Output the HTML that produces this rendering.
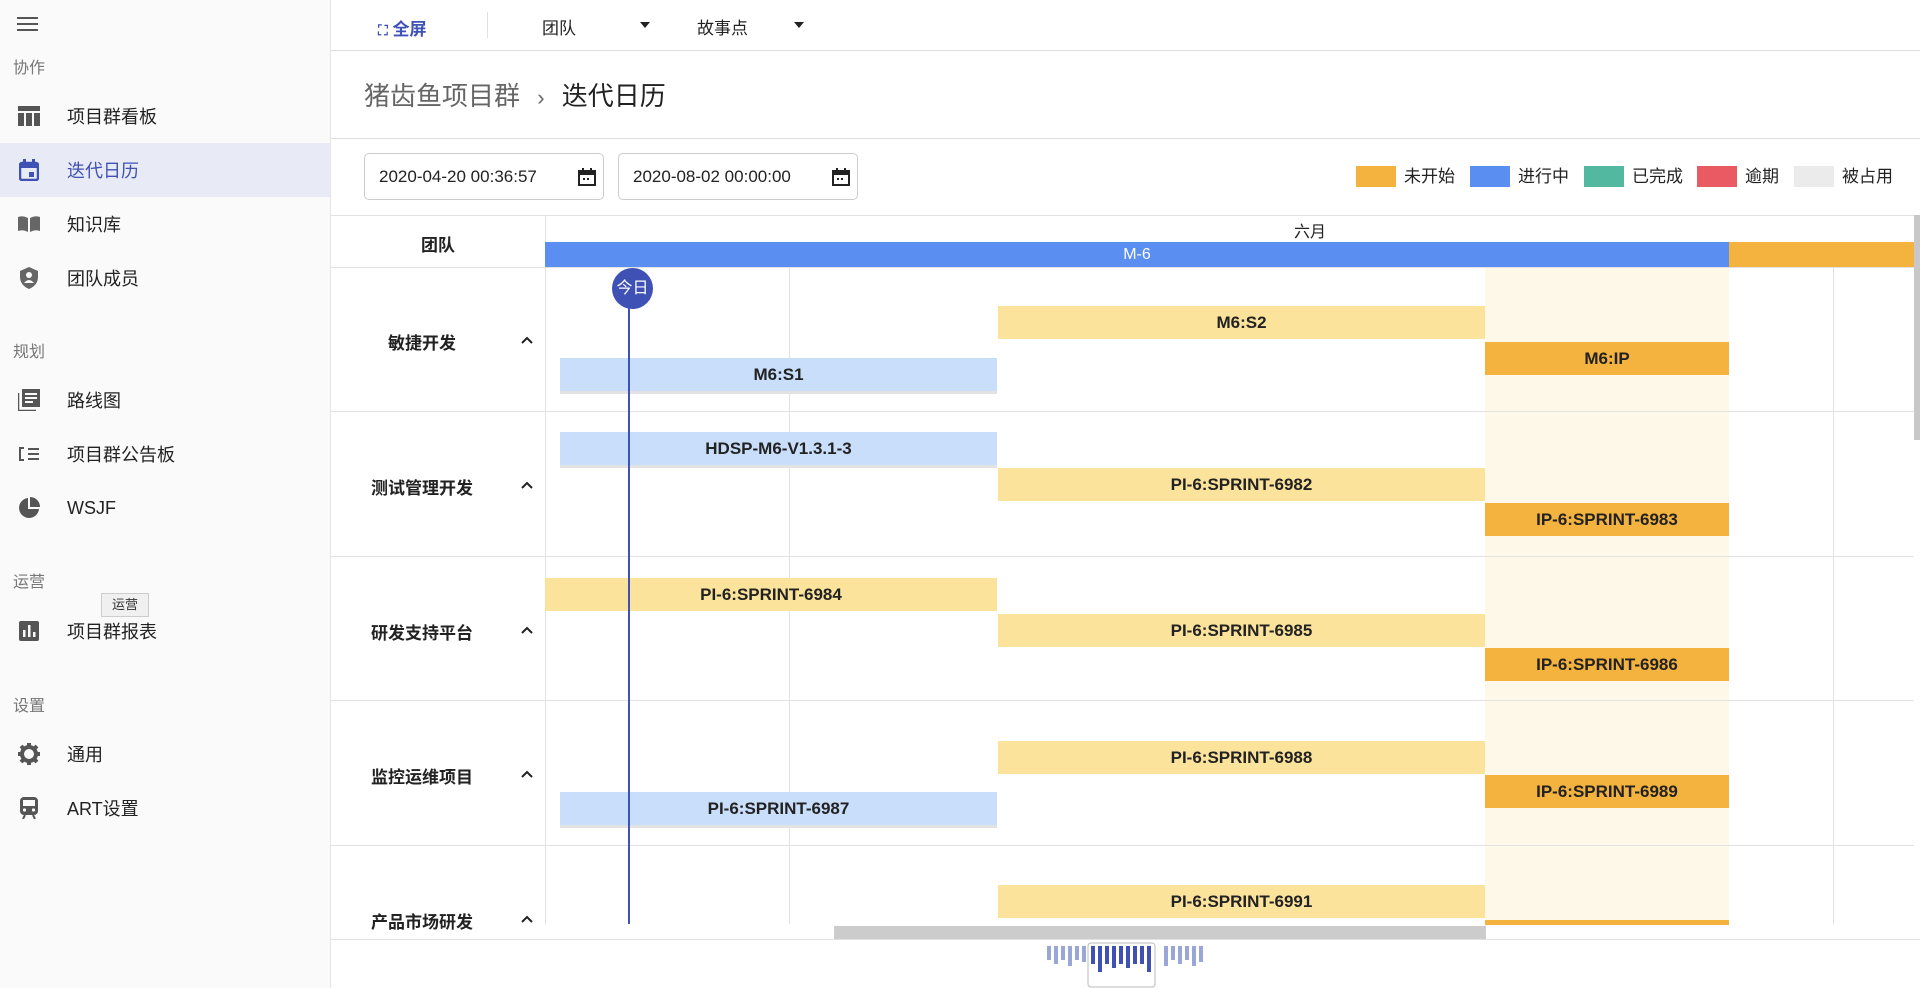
<!DOCTYPE html>
<html><head><meta charset="utf-8"><style>
*{box-sizing:border-box;margin:0;padding:0}
body{width:1920px;height:988px;overflow:hidden;background:#fff;font-family:"Liberation Sans","Noto Sans CJK SC",sans-serif;color:#222;position:relative}
.a{position:absolute}
#side{left:0;top:0;width:331px;height:988px;background:#fafafa;border-right:1px solid #e4e4e4}
.sec{position:absolute;left:13px;font-size:16px;color:#777}
.it{position:absolute;left:0;width:330px;height:54px;display:flex;align-items:center;font-size:18px;color:#222}
.it .ic{width:24px;height:24px;margin-left:17px;margin-right:26px;display:flex;align-items:center;justify-content:center}
.bar{position:absolute;height:33px;display:flex;align-items:center;justify-content:center;font-size:17px;font-weight:bold;color:#222}
.y{background:#fbe39c}.o{background:#f4b23e}.b{background:#c9defa;box-shadow:0 3px 0 #e2e2e2}
.vl{position:absolute;width:1px;background:#e2e2e2}
.hl{position:absolute;height:1px;background:#e2e2e2}
.tl{position:absolute;left:331px;width:214px;text-align:center;font-size:17px;font-weight:bold}
.car{position:absolute;left:521px}
.sw{position:absolute;top:166px;width:40px;height:21px}
.lt{position:absolute;top:166px;font-size:17px;line-height:21px}
</style></head><body>
<div id="side" class="a">
 <div class="a" style="left:17px;top:17px;width:21px;height:14px;border-top:2px solid #555;border-bottom:2px solid #555"><div style="margin-top:4px;height:2px;background:#555"></div></div>
 <div class="sec" style="top:54px">协作</div>
 <div class="it" style="top:89px"><span class="ic"><svg width="22" height="20"><rect x="0" y="0" width="22" height="5" fill="#555"/><rect x="0" y="7" width="6" height="13" fill="#555"/><rect x="8" y="7" width="6" height="13" fill="#555"/><rect x="16" y="7" width="6" height="13" fill="#555"/></svg></span>项目群看板</div>
 <div class="it" style="top:143px;background:#e8eaf6;color:#3f51b5"><span class="ic"><svg width="20" height="22"><rect x="1" y="4" width="18" height="17" rx="2" fill="none" stroke="#3f51b5" stroke-width="2.5"/><rect x="1" y="4" width="18" height="5" fill="#3f51b5"/><rect x="4" y="0" width="3" height="5" fill="#3f51b5"/><rect x="13" y="0" width="3" height="5" fill="#3f51b5"/><rect x="10" y="13" width="5" height="5" fill="#3f51b5"/></svg></span>迭代日历</div>
 <div class="it" style="top:197px"><span class="ic"><svg width="24" height="18"><path d="M1 2 Q6 0 11 3 V17 Q6 14 1 16Z M13 3 Q18 0 23 2 V16 Q18 14 13 17Z" fill="#666"/></svg></span>知识库</div>
 <div class="it" style="top:251px"><span class="ic"><svg width="20" height="24"><path d="M10 1 L19 5 V11 C19 17 15 21 10 23 C5 21 1 17 1 11 V5Z" fill="#666"/><circle cx="10" cy="9" r="3" fill="#fafafa"/><path d="M5 17 Q10 11 15 17" fill="#fafafa"/></svg></span>团队成员</div>
 <div class="sec" style="top:338px">规划</div>
 <div class="it" style="top:373px"><span class="ic"><svg width="22" height="22"><rect x="4" y="0" width="18" height="18" fill="#555"/><path d="M0 4 V22 H18" fill="none" stroke="#555" stroke-width="2.5"/><rect x="7" y="4" width="12" height="2" fill="#fafafa"/><rect x="7" y="8" width="12" height="2" fill="#fafafa"/><rect x="7" y="12" width="8" height="2" fill="#fafafa"/></svg></span>路线图</div>
 <div class="it" style="top:427px"><span class="ic"><svg width="24" height="16"><path d="M7 2 H3 V14 H7" fill="none" stroke="#555" stroke-width="2"/><rect x="11" y="2" width="11" height="2" fill="#555"/><rect x="11" y="7" width="11" height="2" fill="#555"/><rect x="11" y="12" width="11" height="2" fill="#555"/></svg></span>项目群公告板</div>
 <div class="it" style="top:481px"><span class="ic"><svg width="22" height="22"><path d="M10 1 A10 10 0 1 0 21 12 H10Z" fill="#555"/><path d="M12 0 A10 10 0 0 1 22 10 H12Z" fill="#555"/></svg></span>WSJF</div>
 <div class="sec" style="top:568px">运营</div>
 <div class="a" style="left:101px;top:593px;width:48px;height:24px;background:#f0f0f0;border:1px solid #ccc;font-size:13px;text-align:center;line-height:22px;color:#333">运营</div>
 <div class="it" style="top:604px"><span class="ic"><svg width="20" height="20"><rect width="20" height="20" rx="2" fill="#555"/><rect x="4" y="9" width="2.5" height="7" fill="#fafafa"/><rect x="9" y="4" width="2.5" height="12" fill="#fafafa"/><rect x="14" y="11" width="2.5" height="5" fill="#fafafa"/></svg></span>项目群报表</div>
 <div class="sec" style="top:692px">设置</div>
 <div class="it" style="top:727px"><span class="ic"><svg width="22" height="22" viewBox="0 0 22 22"><circle cx="11" cy="11" r="7" fill="none" stroke="#555" stroke-width="4"/><g stroke="#555" stroke-width="4"><path d="M11 0V4M11 18V22M0 11H4M18 11H22M3 3L6 6M16 16L19 19M3 19L6 16M16 6L19 3"/></g></svg></span>通用</div>
 <div class="it" style="top:781px"><span class="ic"><svg width="20" height="22"><rect x="1" y="0" width="18" height="18" rx="4" fill="#555"/><rect x="4" y="3" width="12" height="6" fill="#fafafa"/><circle cx="5.5" cy="13" r="1.6" fill="#fafafa"/><circle cx="14.5" cy="13" r="1.6" fill="#fafafa"/><path d="M4 22 L6 18 M16 22 L14 18" stroke="#555" stroke-width="2"/></svg></span>ART设置</div>
</div>

<div class="a" style="left:331px;top:0;width:1589px;height:51px;border-bottom:1px solid #e0e0e0"></div>
<div class="a" style="left:378px;top:15px;font-size:17px;color:#3f51b5;font-weight:bold"><span style="font-size:14px">⛶</span> 全屏</div>
<div class="a" style="left:487px;top:12px;width:1px;height:26px;background:#e0e0e0"></div>
<div class="a" style="left:542px;top:14px;font-size:17px">团队</div>
<div class="a" style="left:640px;top:22px;border-left:5px solid transparent;border-right:5px solid transparent;border-top:6px solid #222"></div>
<div class="a" style="left:697px;top:14px;font-size:17px">故事点</div>
<div class="a" style="left:794px;top:22px;border-left:5px solid transparent;border-right:5px solid transparent;border-top:6px solid #222"></div>
<div class="a" style="left:364px;top:76px;font-size:26px;color:#666">猪齿鱼项目群 <span style="font-size:22px;margin:0 10px">›</span> <span style="color:#222">迭代日历</span></div>
<div class="a" style="left:331px;top:138px;width:1589px;height:1px;background:#e0e0e0"></div>

<div class="a" style="left:364px;top:153px;width:240px;height:47px;border:1px solid #ccc;border-radius:5px;font-size:17px;padding:13px 14px">2020-04-20 00:36:57</div>
<div class="a" style="left:618px;top:153px;width:240px;height:47px;border:1px solid #ccc;border-radius:5px;font-size:17px;padding:13px 14px">2020-08-02 00:00:00</div>
<svg class="a" style="left:578px;top:168px" width="18" height="18"><rect x="1" y="3" width="16" height="14" fill="none" stroke="#222" stroke-width="2"/><rect x="1" y="3" width="16" height="4" fill="#222"/><rect x="4" y="0" width="2" height="4" fill="#222"/><rect x="12" y="0" width="2" height="4" fill="#222"/><rect x="5" y="10" width="2" height="2" fill="#222"/><rect x="9" y="10" width="2" height="2" fill="#222"/></svg>
<svg class="a" style="left:832px;top:168px" width="18" height="18"><rect x="1" y="3" width="16" height="14" fill="none" stroke="#222" stroke-width="2"/><rect x="1" y="3" width="16" height="4" fill="#222"/><rect x="4" y="0" width="2" height="4" fill="#222"/><rect x="12" y="0" width="2" height="4" fill="#222"/><rect x="5" y="10" width="2" height="2" fill="#222"/><rect x="9" y="10" width="2" height="2" fill="#222"/></svg>

<div class="sw" style="left:1356px;background:#f4b23e"></div><div class="lt" style="left:1404px">未开始</div>
<div class="sw" style="left:1470px;background:#5a8ef0"></div><div class="lt" style="left:1518px">进行中</div>
<div class="sw" style="left:1584px;background:#52b9a0"></div><div class="lt" style="left:1632px">已完成</div>
<div class="sw" style="left:1697px;background:#ea5a62"></div><div class="lt" style="left:1745px">逾期</div>
<div class="sw" style="left:1794px;background:#ebebeb"></div><div class="lt" style="left:1842px">被占用</div>

<div class="hl" style="left:331px;top:215px;width:1583px"></div>
<div class="a" style="left:1485px;top:267px;width:244px;height:657px;background:#fdf8e7"></div>
<div class="vl" style="left:545px;top:215px;height:709px"></div>
<div class="vl" style="left:789px;top:267px;height:657px"></div>
<div class="vl" style="left:1833px;top:267px;height:657px"></div>
<div class="hl" style="left:331px;top:267px;width:1583px"></div>
<div class="hl" style="left:331px;top:411px;width:1583px"></div>
<div class="hl" style="left:331px;top:556px;width:1583px"></div>
<div class="hl" style="left:331px;top:700px;width:1583px"></div>
<div class="hl" style="left:331px;top:845px;width:1583px"></div>
<div class="tl" style="top:231px">团队</div>
<div class="a" style="left:1280px;top:218px;width:60px;text-align:center;font-size:16px">六月</div>
<div class="a" style="left:545px;top:242px;width:1184px;height:25px;background:#5a8ef0;color:#fff;font-size:16px;text-align:center;line-height:25px">M-6</div>
<div class="a" style="left:1729px;top:242px;width:185px;height:25px;background:#f4b23e"></div>
<div class="a" style="left:1914px;top:215px;width:6px;height:225px;background:#c8c8c8"></div>

<div class="tl" style="top:329px;padding-right:32px">敏捷开发</div>
<div class="tl" style="top:474px;padding-right:32px">测试管理开发</div>
<div class="tl" style="top:619px;padding-right:32px">研发支持平台</div>
<div class="tl" style="top:763px;padding-right:32px">监控运维项目</div>
<div class="tl" style="top:908px;padding-right:32px">产品市场研发</div>
<svg class="car" style="top:336px" width="12" height="8"><path d="M1 7 L6 2 L11 7" fill="none" stroke="#222" stroke-width="2"/></svg>
<svg class="car" style="top:481px" width="12" height="8"><path d="M1 7 L6 2 L11 7" fill="none" stroke="#222" stroke-width="2"/></svg>
<svg class="car" style="top:626px" width="12" height="8"><path d="M1 7 L6 2 L11 7" fill="none" stroke="#222" stroke-width="2"/></svg>
<svg class="car" style="top:770px" width="12" height="8"><path d="M1 7 L6 2 L11 7" fill="none" stroke="#222" stroke-width="2"/></svg>
<svg class="car" style="top:915px" width="12" height="8"><path d="M1 7 L6 2 L11 7" fill="none" stroke="#222" stroke-width="2"/></svg>

<div class="bar y" style="left:998px;top:306px;width:487px">M6:S2</div>
<div class="bar o" style="left:1485px;top:342px;width:244px">M6:IP</div>
<div class="bar b" style="left:560px;top:358px;width:437px">M6:S1</div>
<div class="bar b" style="left:560px;top:432px;width:437px">HDSP-M6-V1.3.1-3</div>
<div class="bar y" style="left:998px;top:468px;width:487px">PI-6:SPRINT-6982</div>
<div class="bar o" style="left:1485px;top:503px;width:244px">IP-6:SPRINT-6983</div>
<div class="bar y" style="left:545px;top:578px;width:452px">PI-6:SPRINT-6984</div>
<div class="bar y" style="left:998px;top:614px;width:487px">PI-6:SPRINT-6985</div>
<div class="bar o" style="left:1485px;top:648px;width:244px">IP-6:SPRINT-6986</div>
<div class="bar y" style="left:998px;top:741px;width:487px">PI-6:SPRINT-6988</div>
<div class="bar o" style="left:1485px;top:775px;width:244px">IP-6:SPRINT-6989</div>
<div class="bar b" style="left:560px;top:792px;width:437px">PI-6:SPRINT-6987</div>
<div class="bar y" style="left:998px;top:885px;width:487px">PI-6:SPRINT-6991</div>
<div class="a o" style="left:1485px;top:920px;width:244px;height:5px"></div>

<div class="a" style="left:628px;top:288px;width:2px;height:636px;background:#3f51b5"></div>
<div class="a" style="left:612px;top:268px;width:41px;height:41px;border-radius:50%;background:#3f51b5;color:#fff;font-size:16px;text-align:center;line-height:41px">今日</div>

<div class="a" style="left:834px;top:926px;width:652px;height:13px;background:#ccc"></div>
<div class="hl" style="left:331px;top:939px;width:1589px"></div>
<svg class="a" style="left:1045px;top:942px" width="170" height="46">
<g fill="#9aa6d8"><rect x="2" y="4" width="4" height="14"/><rect x="9" y="4" width="4" height="18"/><rect x="16" y="4" width="4" height="14"/><rect x="23" y="4" width="4" height="20"/><rect x="30" y="4" width="4" height="14"/><rect x="37" y="4" width="4" height="16"/><rect x="119" y="4" width="4" height="20"/><rect x="126" y="4" width="4" height="14"/><rect x="133" y="4" width="4" height="18"/><rect x="140" y="4" width="4" height="14"/><rect x="147" y="4" width="4" height="20"/><rect x="154" y="4" width="4" height="16"/></g>
<g fill="#3f51b5"><rect x="46" y="4" width="4" height="18"/><rect x="53" y="4" width="4" height="26"/><rect x="60" y="4" width="4" height="18"/><rect x="67" y="4" width="4" height="22"/><rect x="74" y="4" width="4" height="18"/><rect x="81" y="4" width="4" height="22"/><rect x="88" y="4" width="4" height="18"/><rect x="95" y="4" width="4" height="18"/><rect x="102" y="4" width="4" height="26"/></g>
<rect x="43" y="1" width="67" height="44" rx="3" fill="none" stroke="#bbb"/>
</svg>
</body></html>
